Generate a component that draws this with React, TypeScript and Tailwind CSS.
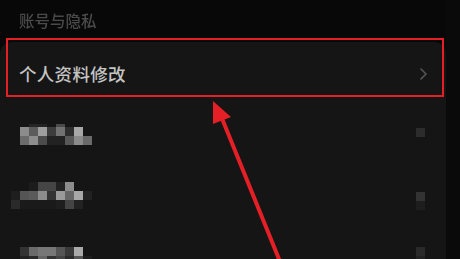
import React from "react";

// mosaic rows: each entry is [height class, list of cell colour classes]
type MosaicRow = { h: string; cells: string[] };

const mosaicA: MosaicRow[] = [
  { h: "h-[3px]", cells: ["bg-transparent", "bg-[#262626]", "bg-[#222]", "bg-transparent", "bg-[#4a4a4a]", "bg-transparent", "bg-transparent", "bg-transparent"] },
  { h: "h-[9px]", cells: ["bg-[#8c8c8c]", "bg-[#5c5c5c]", "bg-[#9e9e9e]", "bg-[#3c3c3c]", "bg-[#727272]", "bg-[#2e2e2e]", "bg-[#a8a8a8]", "bg-transparent"] },
  { h: "h-[9px]", cells: ["bg-[#6c6c6c]", "bg-[#8e8e8e]", "bg-[#4c4c4c]", "bg-[#222]", "bg-[#222]", "bg-[#585858]", "bg-[#8c8c8c]", "bg-[#6a6a6a]"] },
];

const mosaicB: MosaicRow[] = [
  { h: "h-[9px]", cells: ["bg-transparent", "bg-transparent", "bg-[#1c1c1c]", "bg-[#454545]", "bg-[#454545]", "bg-[#222]", "bg-[#8c8c8c]", "bg-transparent", "bg-transparent"] },
  { h: "h-[9px]", cells: ["bg-[#1e1e1e]", "bg-[#555]", "bg-[#5a5a5a]", "bg-[#8c8c8c]", "bg-[#333]", "bg-[#9a9a9a]", "bg-[#666]", "bg-[#a8a8a8]", "bg-[#222]"] },
  { h: "h-[9px]", cells: ["bg-[#2a2a2a]", "bg-[#1a1a1a]", "bg-[#1a1a1a]", "bg-[#1a1a1a]", "bg-[#1a1a1a]", "bg-[#1e1e1e]", "bg-[#444]", "bg-[#222]", "bg-transparent"] },
];

const mosaicC: MosaicRow[] = [
  { h: "h-[9px]", cells: ["bg-[#333]", "bg-[#6a6a6a]", "bg-[#777]", "bg-[#777]", "bg-[#555]", "bg-[#3a3a3a]", "bg-[#aaa]", "bg-transparent"] },
  { h: "h-[9px]", cells: ["bg-[#222]", "bg-[#2a2a2a]", "bg-[#666]", "bg-[#333]", "bg-[#444]", "bg-[#2a2a2a]", "bg-[#555]", "bg-[#1e1e1e]"] },
];

const Mosaic = ({ rows }: { rows: MosaicRow[] }) => (
  <div className="flex flex-col">
    {rows.map((r, i) => (
      <div key={i} className="flex">
        {r.cells.map((c, j) => (
          <div key={j} className={`w-[9px] ${r.h} ${c}`} />
        ))}
      </div>
    ))}
  </div>
);

const App = () => {
  return (
    <div
      className="relative w-[460px] h-[259px] overflow-hidden bg-[#080808] flex"
      style={{ fontFamily: '"Noto Sans CJK SC", "Noto Sans", sans-serif' }}
    >
      <div className="w-[446px] flex flex-col">
        <div className="h-[42px] shrink-0 pl-[19px] pt-[10px] text-[15.5px] leading-[20px] font-medium text-[#4a4a4a] blur-[0.3px]">
          账号与隐私
        </div>
        <div className="flex-1 min-h-0 bg-[#151515] rounded-t-[12px] pt-[2px]">
          {/* row 1 */}
          <div className="h-[60px] flex items-center justify-between pl-[19px] pr-[19px]">
            <span className="text-[17.5px] font-medium text-[#c4c4c4] tracking-[0.3px]">个人资料修改</span>
            <svg width="7" height="12" viewBox="0 0 7 12" fill="none">
              <path d="M1 1l5 5-5 5" stroke="#555" strokeWidth="1.6" strokeLinecap="round" strokeLinejoin="round" />
            </svg>
          </div>
          {/* row 2 */}
          <div className="h-[60px] flex items-start justify-between pl-[20px] pr-[21px]">
            <div className="mt-[20px]">
              <Mosaic rows={mosaicA} />
            </div>
            <div className="mt-[24px] w-[9px] h-[9px] bg-[#2c2c2c]" />
          </div>
          {/* row 3 */}
          <div className="h-[60px] flex items-start justify-between pl-[11px] pr-[21px]">
            <div className="mt-[18px]">
              <Mosaic rows={mosaicB} />
            </div>
            <div className="mt-[28px] flex flex-col">
              <div className="w-[9px] h-[9px] bg-[#333]" />
              <div className="w-[9px] h-[9px] bg-[#1e1e1e]" />
            </div>
          </div>
          {/* row 4 */}
          <div className="h-[60px] flex items-start justify-between pl-[20px] pr-[21px]">
            <div className="mt-[23px]">
              <Mosaic rows={mosaicC} />
            </div>
            <div className="mt-[23px] flex flex-col">
              <div className="w-[9px] h-[9px] bg-[#2a2a2a]" />
              <div className="w-[9px] h-[9px] bg-[#222]" />
            </div>
          </div>
        </div>
      </div>
      <div className="flex-1 bg-[#0a0a0a]" />

      {/* annotation: red box */}
      <div className="absolute left-[6px] top-[38px] w-[438px] h-[59px] border-2 border-[#e41f26]" />

      {/* annotation: arrow */}
      <svg className="absolute left-0 top-0" width="460" height="259" viewBox="0 0 460 259">
        <line x1="221" y1="116" x2="281" y2="264" stroke="#e41f26" strokeWidth="4" />
        <polygon points="213,101 231,117 213,124" fill="#e41f26" />
      </svg>
    </div>
  );
};

export default App;
